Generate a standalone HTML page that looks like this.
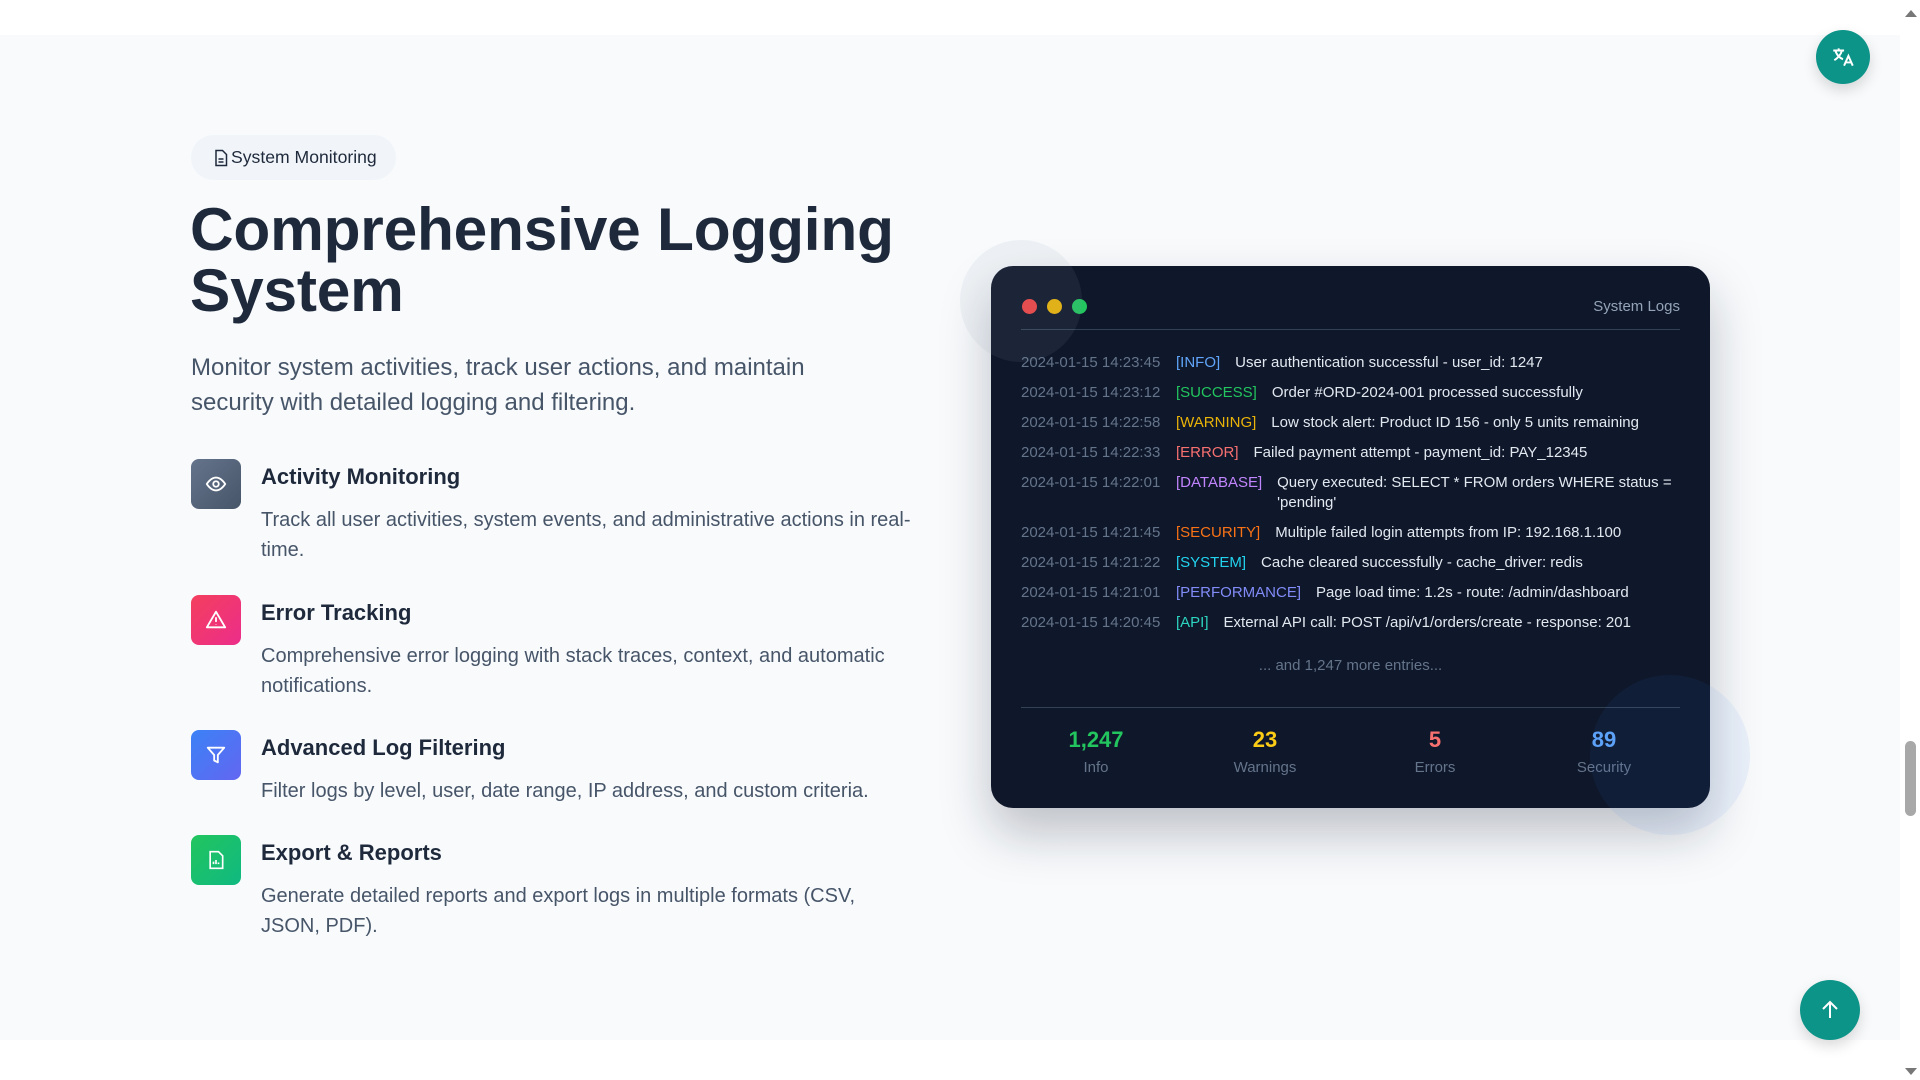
<!DOCTYPE html>
<html><head><meta charset="utf-8"><style>
*{box-sizing:border-box;margin:0;padding:0}
body{width:1920px;height:1080px;overflow:hidden;background:#fff;font-family:"Liberation Sans",sans-serif;position:relative}
.sec{position:absolute;left:0;top:35px;width:1900px;height:1005px;background:#f8fafc}
.sb{position:absolute;right:0;top:0;width:19px;height:1080px;background:#fff}
.thumb{position:absolute;right:4px;top:741px;width:11px;height:75px;background:#a8a8a8;border-radius:6px}
.badge{position:absolute;left:191px;top:135px;height:45px;padding:0 19px 0 22px;border-radius:23px;background:#f1f5f9;display:flex;align-items:center;gap:2px;font-size:17.6px;color:#1e293b}
h1{position:absolute;left:190px;top:199px;font-size:60.4px;line-height:61px;font-weight:bold;color:#1e293b;letter-spacing:-0.2px}
.lead{position:absolute;left:191px;top:350px;width:650px;font-size:24px;line-height:35px;color:#475569}
.f{position:absolute;left:191px}
.ic{position:absolute;left:0;top:0;width:50px;height:50px;border-radius:8px;display:flex;align-items:center;justify-content:center}
.ft{position:absolute;left:70px;top:5px;font-size:22px;font-weight:bold;color:#1e293b;white-space:nowrap}
.fd{position:absolute;left:70px;top:46px;width:650px;font-size:20px;line-height:30px;color:#475569}
.card{position:absolute;left:991px;top:266px;width:719px;height:542px;background:#0f172a;border-radius:22px;box-shadow:0 25px 50px rgba(15,23,42,.25);overflow:hidden}
.c1{position:absolute;left:960px;top:240px;width:122px;height:122px;border-radius:50%;background:rgba(148,163,184,.1)}
.c2{position:absolute;left:1590px;top:675px;width:160px;height:160px;border-radius:50%;background:rgba(59,130,246,.07)}
.dot{position:absolute;top:33px;width:15px;height:15px;border-radius:50%}
.tl{position:absolute;right:30px;top:32px;font-size:15px;color:#94a3b8}
.hr{position:absolute;left:30px;right:30px;height:1px;background:#334155}
.rows{position:absolute;left:30px;top:87px;width:665px;font-size:15px;line-height:20px;color:#e2e8f0}
.r{display:flex;margin-bottom:10px}
.ts{color:#64748b;width:155px;flex:none}
.tg{margin-right:15px;flex:none}
.more{position:absolute;left:0;right:0;top:391px;text-align:center;font-size:15px;color:#64748b}
.st{position:absolute;top:461px;width:170px;text-align:center}
.st b{display:block;font-size:22px;line-height:26px}
.st span{display:block;font-size:15px;color:#64748b;margin-top:6px}
.fab{position:absolute;border-radius:50%;background:#0d9488;display:flex;align-items:center;justify-content:center;box-shadow:0 6px 14px rgba(0,0,0,.15)}
</style></head><body>
<div class="sec"></div>
<div class="sb"><div style="position:absolute;left:4px;top:10px;border:6px solid transparent;border-bottom:7px solid #777;border-top:0"></div><div class="thumb"></div><div style="position:absolute;left:4px;bottom:5px;border:6px solid transparent;border-top:7px solid #777;border-bottom:0"></div></div>

<div class="badge"><svg width="16" height="18" viewBox="0 0 16 18" fill="none" stroke="#1e293b" stroke-width="1.5"><path d="M3 1.5h6.5l4 4v11h-10.5z"/><path d="M5.5 10h5M5.5 13h5"/></svg>System Monitoring</div>
<h1>Comprehensive Logging<br>System</h1>
<div class="lead">Monitor system activities, track user actions, and maintain security with detailed logging and filtering.</div>

<div class="f" style="top:459px"><div class="ic" style="background:linear-gradient(135deg,#64748b,#475569)"><svg width="22" height="22" viewBox="0 0 24 24" fill="none" stroke="#fff" stroke-width="2"><path d="M2 12s4-7 10-7 10 7 10 7-4 7-10 7S2 12 2 12z"/><circle cx="12" cy="12" r="3"/></svg></div><div class="ft">Activity Monitoring</div><div class="fd">Track all user activities, system events, and administrative actions in real-time.</div></div>
<div class="f" style="top:595px"><div class="ic" style="background:linear-gradient(135deg,#f43f5e,#ec2d8a)"><svg width="22" height="22" viewBox="0 0 24 24" fill="none" stroke="#fff" stroke-width="2"><path d="M12 3L2 20h20z" stroke-linejoin="round"/><path d="M12 9v5M12 17v.5"/></svg></div><div class="ft">Error Tracking</div><div class="fd">Comprehensive error logging with stack traces, context, and automatic notifications.</div></div>
<div class="f" style="top:730px"><div class="ic" style="background:linear-gradient(135deg,#3b82f6,#6366f1)"><svg width="22" height="22" viewBox="0 0 24 24" fill="none" stroke="#fff" stroke-width="2" stroke-linejoin="round"><path d="M3 4h18l-7 8v8l-4-2v-6z"/></svg></div><div class="ft">Advanced Log Filtering</div><div class="fd">Filter logs by level, user, date range, IP address, and custom criteria.</div></div>
<div class="f" style="top:835px"><div class="ic" style="background:linear-gradient(135deg,#22c55e,#10b981)"><svg width="20" height="20" viewBox="0 0 24 24" fill="none" stroke="#fff" stroke-width="2"><path d="M5 2h10l5 5v15H5z"/><path d="M9 17v-3M12 17v-5M15 17v-2"/></svg></div><div class="ft">Export &amp; Reports</div><div class="fd" style="width:620px">Generate detailed reports and export logs in multiple formats (CSV, JSON, PDF).</div></div>

<div class="card">
<div class="dot" style="left:31px;background:#ef4444"></div><div class="dot" style="left:56px;background:#eab308"></div><div class="dot" style="left:81px;background:#22c55e"></div>
<div class="tl">System Logs</div>
<div class="hr" style="top:63px"></div>
<div class="rows">
<div class="r"><span class="ts">2024-01-15 14:23:45</span><span class="tg" style="color:#60a5fa">[INFO]</span><span>User authentication successful - user_id: 1247</span></div>
<div class="r"><span class="ts">2024-01-15 14:23:12</span><span class="tg" style="color:#22c55e">[SUCCESS]</span><span>Order #ORD-2024-001 processed successfully</span></div>
<div class="r"><span class="ts">2024-01-15 14:22:58</span><span class="tg" style="color:#eab308">[WARNING]</span><span>Low stock alert: Product ID 156 - only 5 units remaining</span></div>
<div class="r"><span class="ts">2024-01-15 14:22:33</span><span class="tg" style="color:#f87171">[ERROR]</span><span>Failed payment attempt - payment_id: PAY_12345</span></div>
<div class="r"><span class="ts">2024-01-15 14:22:01</span><span class="tg" style="color:#c084fc">[DATABASE]</span><span>Query executed: SELECT * FROM orders WHERE status = 'pending'</span></div>
<div class="r"><span class="ts">2024-01-15 14:21:45</span><span class="tg" style="color:#f97316">[SECURITY]</span><span>Multiple failed login attempts from IP: 192.168.1.100</span></div>
<div class="r"><span class="ts">2024-01-15 14:21:22</span><span class="tg" style="color:#22d3ee">[SYSTEM]</span><span>Cache cleared successfully - cache_driver: redis</span></div>
<div class="r"><span class="ts">2024-01-15 14:21:01</span><span class="tg" style="color:#818cf8">[PERFORMANCE]</span><span>Page load time: 1.2s - route: /admin/dashboard</span></div>
<div class="r"><span class="ts">2024-01-15 14:20:45</span><span class="tg" style="color:#2dd4bf">[API]</span><span>External API call: POST /api/v1/orders/create - response: 201</span></div>
</div>
<div class="more">... and 1,247 more entries...</div>
<div class="hr" style="top:441px"></div>
<div class="st" style="left:20px"><b style="color:#22c55e">1,247</b><span>Info</span></div>
<div class="st" style="left:189px"><b style="color:#facc15">23</b><span>Warnings</span></div>
<div class="st" style="left:359px"><b style="color:#f87171">5</b><span>Errors</span></div>
<div class="st" style="left:528px"><b style="color:#60a5fa">89</b><span>Security</span></div>
</div>
<div class="c1"></div><div class="c2"></div>

<div class="fab" style="left:1816px;top:30px;width:54px;height:54px;color:#fff;font-size:20px"><svg width="26" height="26" viewBox="0 0 24 24" fill="none" stroke="#fff" stroke-width="1.8"><path d="M3 6h10M8 4v2M5 6c1 4 4 7 7 8M11 6c-1 4-4 7-7 9"/><path d="M13 20l4-9 4 9M14.5 17h5"/></svg></div>
<div class="fab" style="left:1800px;top:980px;width:60px;height:60px"><svg width="24" height="24" viewBox="0 0 24 24" fill="none" stroke="#fff" stroke-width="2"><path d="M12 20V4M5 11l7-7 7 7"/></svg></div>
</body></html>
